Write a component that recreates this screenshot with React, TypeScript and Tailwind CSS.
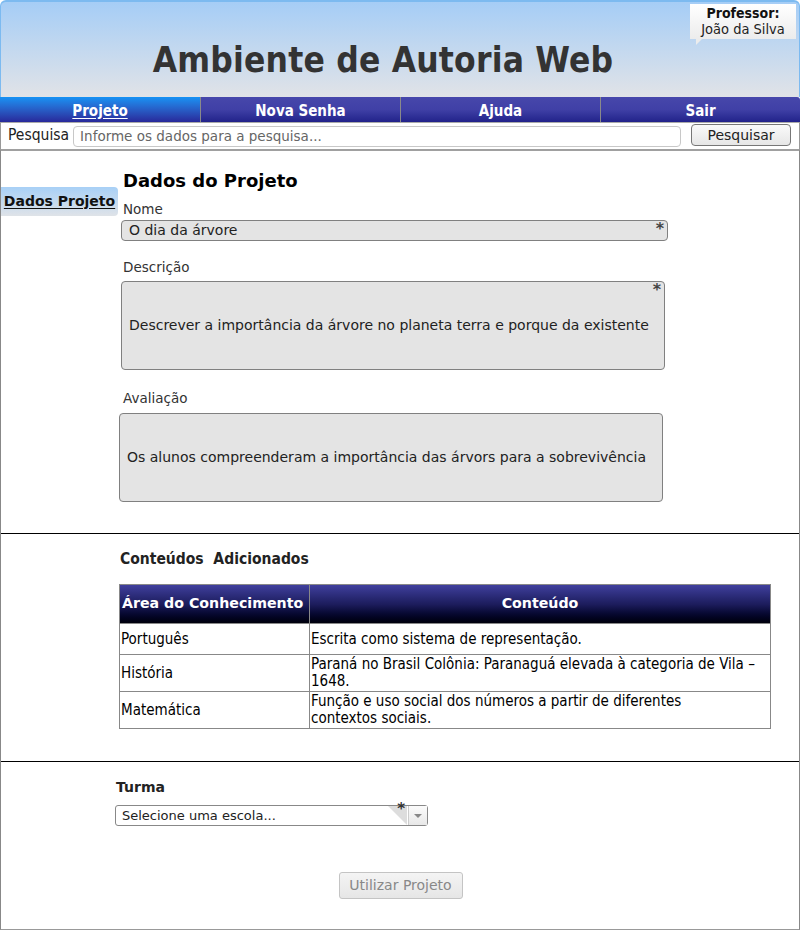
import React from "react";

const sans = { fontFamily: '"DejaVu Sans", Verdana, sans-serif' };
const cond = { fontFamily: '"DejaVu Sans Condensed", "DejaVu Sans", sans-serif', fontStretch: "condensed" as const };

function Star() {
  return <span className="absolute right-[3px] top-[0px] text-[16px] font-bold leading-none text-[#444]" style={sans}>*</span>;
}

export default function App() {
  const rows: [string, React.ReactNode][] = [
    ["Português", "Escrita como sistema de representação."],
    ["História", <>
      <span className="whitespace-nowrap">Paraná no Brasil Colônia: Paranaguá elevada à categoria de Vila –</span><br />1648.
    </>],
    ["Matemática", <>
      <span className="whitespace-nowrap">Função e uso social dos números a partir de diferentes</span><br />contextos sociais.
    </>],
  ];
  return (
    <div className="w-[800px] h-[930px] bg-white overflow-hidden text-black" style={sans}>
      {/* Header */}
      <div className="relative h-[97px] rounded-t-[6px] border-t-2 border-x border-[#7cbaf0] bg-gradient-to-b from-[#a5cdf6] to-[#e1e3e7] flex items-center justify-center">
        <h1 className="text-[35px] font-bold text-[#333] mt-[22px] ml-[-34px] tracking-[0.2px]" style={cond}>Ambiente de Autoria Web</h1>
        <div className="absolute right-[3px] top-[2px] w-[106px] h-[35px] bg-gradient-to-b from-white to-[#ececec] flex flex-col items-center leading-[16px] pt-[1px]">
          <span className="text-[14px] font-bold text-[#111]" style={cond}>Professor:</span>
          <span className="text-[14.5px] text-[#222]" style={cond}>João da Silva</span>
          <div className="absolute left-[6px] bottom-[-6px] w-0 h-0 border-l-[6px] border-l-[#ececec] border-b-[6px] border-b-transparent" />
        </div>
      </div>
      {/* Nav */}
      <div className="flex h-[25px]">
        {["Projeto", "Nova Senha", "Ajuda", "Sair"].map((t, i) => (
          <div
            key={t}
            className={`w-[200px] flex items-center justify-center pt-[3px] text-[15px] font-bold text-white border-l border-[#8a8a8a] ${i === 0 ? "bg-gradient-to-b from-[#1592f4] to-[#28289a] border-l-0" : "bg-gradient-to-b from-[#4747ab] via-[#4040a6] to-[#22228a]"} ${i === 3 ? "rounded-tr-[3px]" : ""}`}
            style={cond}
          >
            <span className={i === 0 ? "underline underline-offset-[2px]" : ""}>{t}</span>
          </div>
        ))}
      </div>
      {/* Search */}
      <div className="h-[27px] flex items-center border-x border-[#999] border-t border-t-[#aaa] pl-[7px] pr-[8px]">
        <span className="text-[15.5px] text-[#222]" style={cond}>Pesquisa</span>
        <div className="ml-[4px] w-[608px] h-[21px] border border-[#c8c8c8] rounded-[4px] flex items-center pl-[6px] text-[13.5px] text-[#666]">Informe os dados para a pesquisa...</div>
        <div className="ml-[10px] w-[100px] h-[22px] border border-[#777] rounded-[4px] bg-gradient-to-b from-[#fafafa] to-[#e6e6e6] flex items-center justify-center text-[14px] text-[#222] mt-[-2px]">Pesquisar</div>
      </div>
      {/* Main */}
      <div className="h-[781px] border-t-2 border-t-[#a0a0a0] border-x border-x-[#888] border-b border-b-[#999]">
        <div className="h-[383px] border-b border-black relative">
          <div className="absolute left-0 top-[36px] w-[117px] h-[29px] rounded-r-[4px] bg-gradient-to-b from-[#a8d0f6] to-[#dfe3e8] flex items-center justify-center text-[14px] font-bold underline underline-offset-[2px] text-[#111]">Dados Projeto</div>
          <div className="pl-[122px] pt-[19px]">
            <h2 className="text-[18px] font-bold leading-[22px] text-black">Dados do Projeto</h2>
            <div className="text-[13.5px] text-[#333] mt-[9px] leading-[16px]">Nome</div>
            <div className="relative mt-[3px] ml-[-2px] w-[547px] h-[21px] bg-[#e4e4e4] border border-[#808080] rounded-[4px] flex items-center pl-[7px] text-[14px] text-[#222]">
              O dia da árvore
              <Star />
            </div>
            <div className="text-[13.5px] text-[#333] mt-[18px] leading-[16px]">Descrição</div>
            <div className="relative mt-[6px] ml-[-2px] w-[544px] h-[89px] bg-[#e4e4e4] border border-[#808080] rounded-[4px] flex items-center pl-[7px] text-[14px] text-[#222]">
              Descrever a importância da árvore no planeta terra e porque da existente
              <Star />
            </div>
            <div className="text-[13.5px] text-[#333] mt-[20px] leading-[16px]">Avaliação</div>
            <div className="relative mt-[7px] ml-[-4px] w-[544px] h-[89px] bg-[#e4e4e4] border border-[#808080] rounded-[4px] flex items-center pl-[7px] text-[14px] text-[#222]">
              Os alunos compreenderam a importância das árvors para a sobrevivência
            </div>
          </div>
        </div>
        <div className="h-[228px] border-b border-black pl-[118px] pt-[16px]">
          <h3 className="text-[15.5px] font-bold text-[#222] leading-[19px] ml-[1px]" style={cond}>Conteúdos&nbsp;&nbsp;Adicionados</h3>
          <table className="mt-[15px] w-[652px] border-collapse text-[15px]" style={cond}>
            <thead>
              <tr className="h-[39px] bg-gradient-to-b from-[#40409e] via-[#1c1c5c] to-[#000008] text-white text-[14.2px] font-bold" style={{ ...sans, fontStretch: "normal" }}>
                <th className="w-[190px] border border-[#888] text-left pl-[2px] font-bold">Área do Conhecimento</th>
                <th className="border border-[#888] font-bold">Conteúdo</th>
              </tr>
            </thead>
            <tbody>
              {rows.map((r, i) => (
                <tr key={i} className={i === 0 ? "h-[31px]" : "h-[37px]"}>
                  <td className="border border-[#888] pl-[1px] align-middle leading-[17px]">{r[0]}</td>
                  <td className="border border-[#888] pl-[1px] pr-[2px] align-middle leading-[17px]">{r[1]}</td>
                </tr>
              ))}
            </tbody>
          </table>
        </div>
        <div className="pl-[114px] pt-[16px]">
          <div className="text-[14px] font-bold text-[#222] leading-[18px] ml-[1px]">Turma</div>
          <div className="relative mt-[9px] w-[313px] h-[21px] border border-[#888] rounded-[3px] flex items-center pl-[6px] text-[13px] text-[#222]">
            Selecione uma escola...
            <div className="absolute right-[20px] top-0 w-0 h-0 border-t-[19px] border-t-[#ddd] border-l-[19px] border-l-transparent" />
            <span className="absolute right-[22px] top-[-4px] text-[15px] font-bold text-[#333] leading-none">*</span>
            <div className="absolute right-0 top-0 bottom-0 w-[19px] border-l border-[#ccc] bg-gradient-to-b from-[#fbfbfb] to-[#e8e8e8] flex items-center justify-center">
              <div className="w-0 h-0 border-x-[4px] border-x-transparent border-t-[4px] border-t-[#888]" />
            </div>
          </div>
          <div className="flex justify-center w-[460px] mt-[46px]">
            <div className="ml-[111px] w-[124px] h-[27px] border border-[#c4c4c4] rounded-[3px] bg-gradient-to-b from-[#f4f4f4] to-[#e6e6e6] flex items-center justify-center text-[14px] text-[#888]">Utilizar Projeto</div>
          </div>
        </div>
      </div>
    </div>
  );
}
